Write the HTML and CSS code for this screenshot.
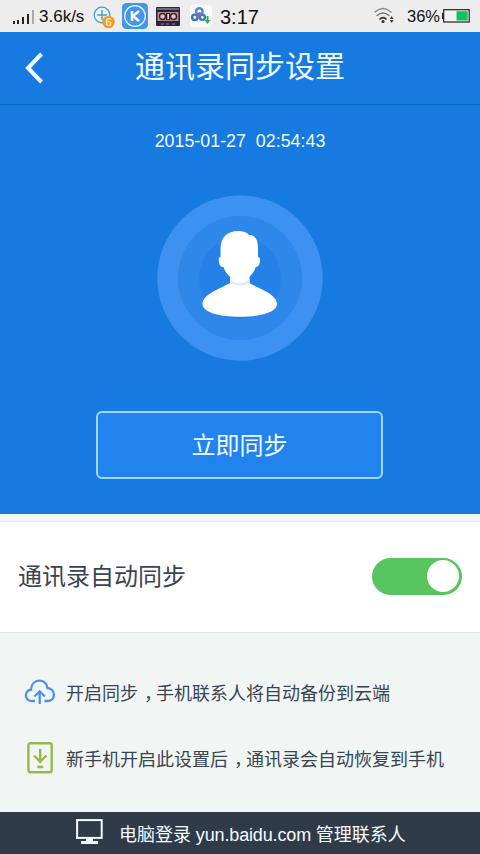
FILE: index.html
```html
<!DOCTYPE html>
<html lang="zh-CN">
<head>
<meta charset="utf-8">
<title>通讯录同步设置</title>
<link rel="stylesheet" href="styles.css">
</head>
<body>
<header class="status">
  <svg class="signal" width="24" height="16" viewBox="0 0 24 16"><path fill="#222" d="M1 12h2v3H1zM5 11h2v4H5zM10 8h2v7h-2zM15 5h2v10h-2z"/><path fill="#aaa" d="M20 1h2v14h-2z"/></svg>
  <span class="speed">3.6k/s</span>
  <svg class="app-plus" width="24" height="24" viewBox="0 0 24 24"><circle cx="9" cy="10" r="7.8" fill="#edf3f5" stroke="#4a9fc4" stroke-width="1.3"/><path d="M9 5v10M4 10h10" stroke="#4a9fc4" stroke-width="1.4"/><circle cx="15.500" cy="17" r="6.300" fill="#f39a28"/><text x="15.500" y="21" text-anchor="middle" font-size="11" fill="#fff">6</text></svg>
  <svg class="app-k" width="26" height="26" viewBox="0 0 26 26"><rect width="26" height="26" rx="4.500" fill="#4297ea"/><circle cx="13" cy="13" r="10.300" fill="none" stroke="#e4f2ff" stroke-width="1.300"/><path d="M10 8v10M17 8l-6 5 6 5" fill="none" stroke="#fff" stroke-width="2.500"/></svg>
  <svg class="app-tape" width="24" height="19" viewBox="0 0 24 19"><rect width="24" height="19" rx="1" fill="#25263f"/><path d="M1 2h22" stroke="#6c6684" stroke-width="2"/><rect x="1.500" y="5" width="21" height="9" fill="#bd8b82"/><circle cx="6.500" cy="9.500" r="3" fill="#d9c4bd" stroke="#40243a" stroke-width="1.500"/><circle cx="17.500" cy="9.500" r="3" fill="#d9c4bd" stroke="#40243a" stroke-width="1.500"/><path fill="#292038" d="M10 6h4v7h-4z"/><path fill="#e7ddd9" d="M11.300 7h1.700v5h-1.700z"/><path d="M5 17h3M10 17h3M16 17h3" stroke="#8b83a5"/></svg>
  <svg class="app-cloud" width="22" height="22" viewBox="0 0 22 22"><rect width="22" height="22" rx="3" fill="#fafafa"/><g fill="none" stroke-width="2.400"><circle cx="4.800" cy="12.300" r="2.700" stroke="#3979c5"/><circle cx="12.300" cy="12.300" r="2.600" stroke="#3979c5"/><circle cx="9.300" cy="6.500" r="3.300" stroke="#3d8fdd"/><path d="M6.500 11.500l4-4" stroke="#d8495b"/></g><path fill="#3ca84a" d="M16.500 11h2v4h2L17.500 19l-3-4h2z"/></svg>
  <time class="clock">3:17</time>
  <svg class="wifi" width="22" height="18" viewBox="0 0 22 18"><g fill="none" stroke-linecap="round"><path d="M1 5q8-7 16 0" stroke="#888" stroke-width="1.300"/><path d="M3 8.500q6-5 12 0" stroke="#777" stroke-width="1.500"/><path d="M6 12q3-2.500 6 0" stroke="#444" stroke-width="1.700"/></g><circle cx="9" cy="14.500" r="1.600" fill="#333"/><path fill="#333" d="M17.700 9l1.800 3h-3.600zM17.700 16l-1.800-3h3.600z"/></svg>
  <span class="percent">36%</span>
  <svg class="battery" width="28" height="14" viewBox="0 0 28 14"><path fill="#222" d="M0 4h1.500v6H0z"/><rect x="1.700" y=".7" width="25.500" height="12.300" fill="#f4f4f4" stroke="#222" stroke-width="1.200"/><path fill="#13c25c" d="M14.500 2.200h11.200v9.300H14.500z"/></svg>
</header>
<main>
  <section class="hero">
    <div class="titlebar">
      <svg class="back" width="20" height="32" viewBox="0 0 20 32"><path d="M17.500 2L4 16l13.500 14" fill="none" stroke="#f2fbff" stroke-width="4"/></svg>
      <h1>通讯录同步设置</h1>
    </div>
    <time class="date">2015-01-27&nbsp; 02:54:43</time>
    <svg class="avatar" width="166" height="166" viewBox="0 0 166 166">
      <circle cx="83" cy="83" r="82.700" fill="#3c91f1"/>
      <circle cx="83" cy="83" r="62" fill="#2e88ea"/>
      <circle cx="83" cy="83" r="41" fill="#2581e7"/>
      <path fill="#fff" d="M73 80v8C64 93.500 45.500 99 45.500 109c0 8 16 12.800 37.300 12.800S120 117 120 109c0-10-18.500-15.500-27.500-21v-8z"/>
      <path d="M73 84c7 6 12.500 6 19.500 0v3.500c-7 4-12.500 4-19.500 0z" fill="#dceafa"/>
      <path fill="#fff" d="M63.500 62V54c0-12 7-18 18-18 5 0 8 1 10.500 4C98 39.500 101 45 101 53v9c2.200 0 2.200 2 1.800 5-.5 4-2 5-4 5C96 80 89 86.500 83 86.500S69 80 66.500 72c-2.500 0-4-1-4.500-5-.4-3-.5-5 1.500-5z"/>
    </svg>
    <button class="sync">立即同步</button>
  </section>
  <section class="setting">
    <span class="label">通讯录自动同步</span>
    <span class="switch"><span class="knob"></span></span>
  </section>
  <ul class="tips">
    <li>
      <svg width="32" height="26" viewBox="0 0 32 26"><g fill="none" stroke="#4b91ec" stroke-width="2.300"><path d="M11 22H8C.5 22-.5 12 7 10.500 7.500-1 22.500-1 23.500 9c9 1 8 13 0 13h-3"/><path d="M15.700 25V12.500M10.500 17.500l5.200-5.200 5.200 5.200"/></g></svg>
      <span>开启同步<span class="comma">，</span>手机联系人将自动备份到云端</span>
    </li>
    <li>
      <svg width="32" height="32" viewBox="0 0 32 32"><g fill="none" stroke="#98b94a" stroke-width="2.400"><rect x="4.400" y="1.300" width="23.300" height="29" rx="2"/><path d="M16.200 7v12.500M10 13.500l6.200 6.200 6.200-6.200M13.200 25h6"/></g></svg>
      <span>新手机开启此设置后<span class="comma">，</span>通讯录会自动恢复到手机</span>
    </li>
  </ul>
</main>
<footer class="footer">
  <svg width="28" height="26" viewBox="0 0 28 26"><rect x="1.100" y="1.100" width="24.600" height="17.800" fill="none" stroke="#f5fbff" stroke-width="2"/><path fill="#f5fbff" d="M10 19h7v3h5v3H5v-3h5z"/></svg>
  <span>电脑登录<span class="url"> yun.baidu.com </span>管理联系人</span>
</footer>
</body>
</html>
```
FILE: styles.css
```css
* { box-sizing: border-box; }
body {
  margin: 0;
  height: 854px;
  display: flex;
  flex-direction: column;
  overflow: hidden;
  background: #f1f6f5;
  color: #394452;
  font-family: "Liberation Sans", "Noto Sans CJK SC", sans-serif;
}
main { flex: 1; }
.status {
  height: 32px;
  flex: none;
  display: flex;
  align-items: center;
  padding: 0 9px 0 12px;
  background: #ededed;
  color: #111;
  white-space: nowrap;
}
.status svg { flex: none; }
.signal { margin-top: 2px; }
.speed { width: 45px; margin-left: 3px; font-size: 17px; padding-top: 1px; }
.app-plus { margin: 2px 5px 0 9px; }
.app-k { margin-right: 8px; }
.app-tape { margin-right: 10px; }
.app-cloud { margin-right: 8px; }
.clock { font-size: 20px; margin-top: 2px; }
.wifi { margin-left: auto; }
.percent { width: 33px; margin: 0 2px 0 11px; font-size: 16.500px; }
.battery { margin-right: 1px; }
.hero {
  height: 482px;
  display: flex;
  flex-direction: column;
  align-items: center;
  background: #167ae0;
  color: #f0faff;
}
.titlebar {
  width: 100%;
  height: 73px;
  display: grid;
  grid-template-columns: 48px 1fr 48px;
  align-items: center;
  border-bottom: 1px solid #1268bf;
}
.back { margin-left: 24px; }
h1 { margin: 0; text-align: center; font-size: 30px; line-height: 40px; font-weight: 400; padding-bottom: 3px; }
.date { margin-top: 25px; font-size: 17.850px; line-height: 22px; }
.avatar { margin-top: 42.500px; }
.sync {
  width: 287px;
  height: 68px;
  margin: 50.500px 1px 0 0;
  padding: 0 0 3px;
  border: 2px solid #a2d8ff;
  border-radius: 6px;
  background: #2183ed;
  color: #f0faff;
  font: inherit;
  font-size: 24px;
}
.setting {
  height: 112px;
  margin-top: 7px;
  padding: 0 18px 2px;
  display: flex;
  align-items: center;
  justify-content: space-between;
  border-top: 1px solid #e8e9e7;
  border-bottom: 1px solid #e0e7e6;
  background: #fff;
  font-size: 24px;
}
.label { padding-bottom: 4px; }
.switch {
  width: 90px;
  height: 37px;
  padding: 0 3px;
  display: flex;
  align-items: center;
  justify-content: flex-end;
  border-radius: 19px;
  background: #57c45f;
}
.knob { width: 32px; height: 32px; border-radius: 50%; background: #fff; }
.tips { margin: 0; padding: 26px 24px 0; list-style: none; font-size: 18px; }
.tips li { height: 66px; display: flex; align-items: center; gap: 10px; white-space: nowrap; }
.tips li > span { padding-bottom: 1px; }
.tips svg { flex: none; }
.comma { padding-left: 6px; margin-right: -6px; }
.footer {
  height: 42px;
  flex: none;
  display: flex;
  align-items: center;
  gap: 15px;
  padding-left: 76px;
  background: #303b49;
  color: #f5fbff;
  font-size: 18px;
  white-space: nowrap;
}
.footer svg { margin-bottom: 2px; }
.url { letter-spacing: -0.15px; }
```
